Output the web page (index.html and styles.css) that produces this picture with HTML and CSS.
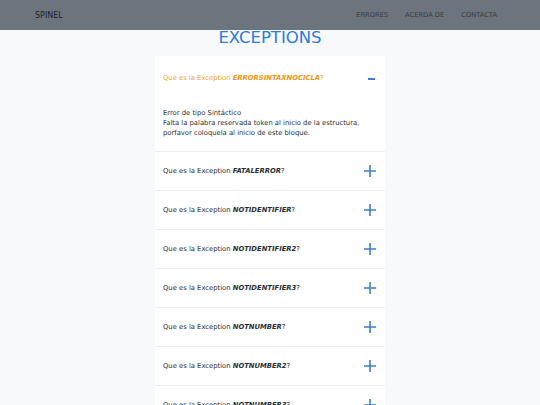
FILE: index.html
```html
<!DOCTYPE html>
<html lang="es">
<head>
<meta charset="utf-8">
<link rel="stylesheet" href="styles.css">
</head>
<body>
<nav class="navbar">
  <span class="brand">SPINEL</span>
  <div class="links">
    <span>ERRORES</span>
    <span>ACERDA DE</span>
    <span>CONTACTA</span>
  </div>
</nav>
<h1 class="title">EXCEPTIONS</h1>
<div class="accordion">
  <div class="item open">
    <div class="head"><span class="q">Que es la Exception <b>ERRORSINTAXNOCICLA</b>?</span><span class="minus"></span></div>
    <div class="body">Error de tipo Sintáctico<br>Falta la palabra reservada token al inicio de la estructura, porfavor coloquela al inicio de este bloque.</div>
  </div>
  <div class="item">
    <div class="head"><span class="q">Que es la Exception <b>FATALERROR</b>?</span><svg class="plus" viewBox="0 0 12 12"><path d="M6 0V12M0 6H12"/></svg></div>
  </div>
  <div class="item">
    <div class="head"><span class="q">Que es la Exception <b>NOTIDENTIFIER</b>?</span><svg class="plus" viewBox="0 0 12 12"><path d="M6 0V12M0 6H12"/></svg></div>
  </div>
  <div class="item">
    <div class="head"><span class="q">Que es la Exception <b>NOTIDENTIFIER2</b>?</span><svg class="plus" viewBox="0 0 12 12"><path d="M6 0V12M0 6H12"/></svg></div>
  </div>
  <div class="item">
    <div class="head"><span class="q">Que es la Exception <b>NOTIDENTIFIER3</b>?</span><svg class="plus" viewBox="0 0 12 12"><path d="M6 0V12M0 6H12"/></svg></div>
  </div>
  <div class="item">
    <div class="head"><span class="q">Que es la Exception <b>NOTNUMBER</b>?</span><svg class="plus" viewBox="0 0 12 12"><path d="M6 0V12M0 6H12"/></svg></div>
  </div>
  <div class="item">
    <div class="head"><span class="q">Que es la Exception <b>NOTNUMBER2</b>?</span><svg class="plus" viewBox="0 0 12 12"><path d="M6 0V12M0 6H12"/></svg></div>
  </div>
  <div class="item">
    <div class="head"><span class="q">Que es la Exception <b>NOTNUMBER3</b>?</span><svg class="plus" viewBox="0 0 12 12"><path d="M6 0V12M0 6H12"/></svg></div>
  </div>
</div>
</body>
</html>
```
FILE: styles.css
```css
html, body {
  margin: 0;
  padding: 0;
}
body {
  background: #f8f9fa;
  font-family: "DejaVu Sans", sans-serif;
  color: #212529;
  overflow: hidden;
}
.navbar {
  height: 30px;
  background: #6c757d;
  display: flex;
  align-items: center;
  justify-content: space-between;
  padding: 0 43px 0 35px;
}
.brand {
  font-size: 8px;
  color: #1f2326;
}
.links {
  display: flex;
  gap: 17px;
  font-size: 6.7px;
  color: #34393e;
}
.title {
  margin: 0 0 10px;
  text-align: center;
  font-weight: normal;
  font-size: 16.5px;
  line-height: 16px;
  color: #2b7bdc;
}
.accordion {
  width: 230px;
  margin: 0 auto;
  background: #fff;
}
.item {
  border-bottom: 1px solid #eceef0;
}
.head {
  display: flex;
  align-items: center;
  justify-content: space-between;
  height: 38px;
  padding: 0 9px 0 8px;
  font-size: 6.8px;
  color: #2a2e33;
}
.item.open .head {
  height: 44px;
  color: #f2a230;
}
.q b {
  font-style: italic;
  font-weight: bold;
}
.item.open .q b {
  color: #ef9510;
}
.plus {
  width: 12px;
  height: 12px;
  stroke: #3b7dd2;
  stroke-width: 1.6;
  fill: none;
}
.minus {
  width: 7px;
  height: 2px;
  background: #3b7dd2;
  margin-right: 1px;
  margin-top: 2px;
}
.body {
  padding: 8px 8px 13px;
  font-size: 6.8px;
  line-height: 10px;
  color: #2a2e33;
}
```
